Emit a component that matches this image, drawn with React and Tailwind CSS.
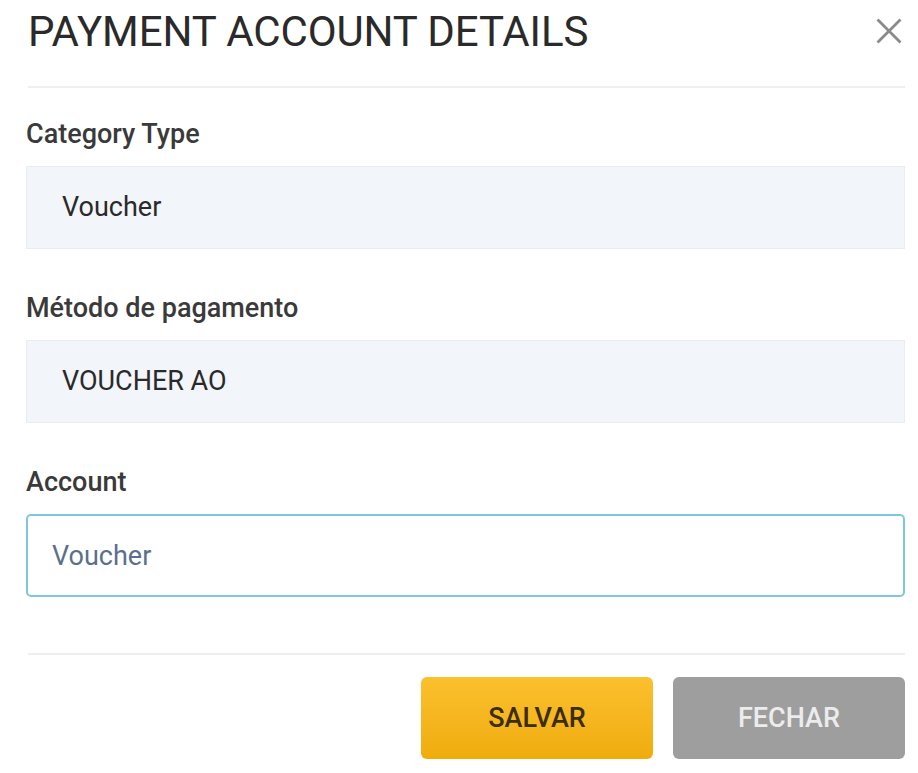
import React from "react";

const CloseIcon = () => (
  <svg
    className="h-[28px] w-[28px] text-[#8a8a8a]"
    viewBox="0 0 24 24"
    fill="none"
    stroke="currentColor"
  >
    <path strokeWidth={2.4} strokeLinecap="square" d="M3 3L21 21M21 3L3 21" />
  </svg>
);

const Field = ({ label, children }) => (
  <div className="flex flex-col">
    <label className="h-[30px] leading-[30px] text-[27px] font-medium text-[#3a3a3a]">
      {label}
    </label>
    <div className="mt-[17px]">{children}</div>
  </div>
);

const ReadOnlyBox = ({ value }) => (
  <div className="h-[83px] flex items-center pl-[35px] bg-[#f2f5f9] border border-[#e9edf2] text-[27px] text-[#2a2a2a]">
    {value}
  </div>
);

export default function App() {
  return (
    <div
      className="w-[918px] h-[773px] bg-white pl-[26px] pr-[13px] overflow-hidden"
      style={{ fontFamily: "Roboto, 'Liberation Sans', sans-serif" }}
    >
      <div className="h-[62px] flex items-center justify-between pl-[2px]">
        <h1 className="text-[42px] font-normal text-[#2a2a2a] tracking-[-0.1px]">
          PAYMENT ACCOUNT DETAILS
        </h1>
        <button className="mr-[2px]" aria-label="Close">
          <CloseIcon />
        </button>
      </div>

      <div className="mt-[24px] h-[2px] bg-[#efefef] ml-[2px]" />

      <div className="mt-[31px] flex flex-col gap-[44px]">
        <Field label="Category Type">
          <ReadOnlyBox value="Voucher" />
        </Field>
        <Field label="Método de pagamento">
          <ReadOnlyBox value="VOUCHER AO" />
        </Field>
        <Field label="Account">
          <input
            defaultValue="Voucher"
            className="w-full h-[83px] pl-[24px] bg-white border-2 border-[#7fc6df] rounded-[5px] text-[27px] text-[#5a6f8c] outline-none"
          />
        </Field>
      </div>

      <div className="mt-[56px] h-[2px] bg-[#efefef] ml-[2px]" />

      <div className="mt-[22px] flex justify-end gap-[20px]">
        <button className="w-[232px] h-[82px] rounded-[6px] bg-gradient-to-b from-[#fbc02d] to-[#efac0a] text-[27px] font-medium text-[#3b2d08]">
          SALVAR
        </button>
        <button className="w-[232px] h-[82px] rounded-[6px] bg-[#9e9e9e] text-[27px] font-medium text-[#ececec]">
          FECHAR
        </button>
      </div>
    </div>
  );
}
